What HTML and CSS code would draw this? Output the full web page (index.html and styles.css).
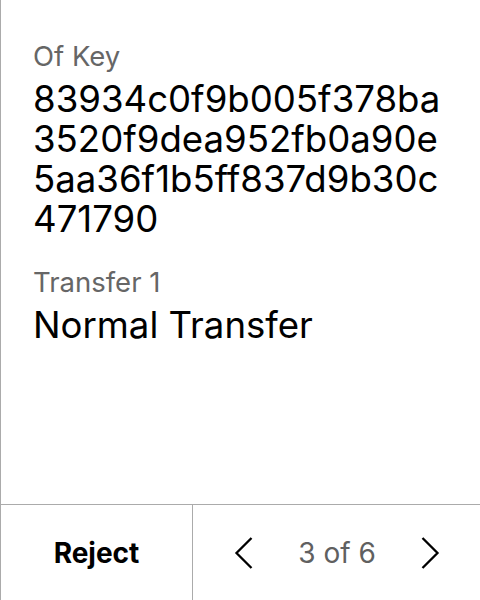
FILE: index.html
```html
<!DOCTYPE html>
<html>
<head>
<meta charset="utf-8">
<link rel="stylesheet" href="styles.css">
</head>
<body>
<div class="screen">
  <div class="content">
    <div class="field">
      <div class="label">Of Key</div>
      <div class="value">83934c0f9b005f378ba<br>3520f9dea952fb0a90e<br>5aa36f1b5ff837d9b30c<br>471790</div>
    </div>
    <div class="field">
      <div class="label">Transfer 1</div>
      <div class="value">Normal Transfer</div>
    </div>
  </div>
  <div class="footer">
    <div class="reject">Reject</div>
    <div class="pager">
      <svg class="chev" width="20" height="34" viewBox="0 0 20 34"><path d="M17.5 2 L2.5 17 L17.5 32" fill="none" stroke="#000" stroke-width="2.3"/></svg>
      <span class="count">3 of 6</span>
      <svg class="chev" width="20" height="34" viewBox="0 0 20 34"><path d="M2.5 2 L17.5 17 L2.5 32" fill="none" stroke="#000" stroke-width="2.3"/></svg>
    </div>
  </div>
</div>
</body>
</html>
```
FILE: styles.css
```css
html, body { margin: 0; padding: 0; background: #fff; }
body { font-family: Inter, "Noto Sans", sans-serif; color: #000; }
.screen { width: 480px; height: 600px; display: flex; flex-direction: column; border-left: 1px solid #ababab; box-sizing: border-box; }
.content { flex: 1; padding: 40px 0 0 32px; display: flex; flex-direction: column; gap: 27px; }
.label { font-size: 27.5px; line-height: 32px; color: #666; }
.value { font-size: 36.6px; line-height: 40px; margin-top: 7px; }
.footer { height: 96px; box-sizing: border-box; border-top: 1px solid #ababab; display: flex; }
.reject { width: 191px; border-right: 1px solid #ababab; display: flex; align-items: center; justify-content: center; font-size: 28px; font-weight: 700; }
.pager { flex: 1; display: flex; align-items: center; justify-content: space-between; padding: 0 40px 0 41px; }
.count { font-size: 28px; color: #606060; }
```
